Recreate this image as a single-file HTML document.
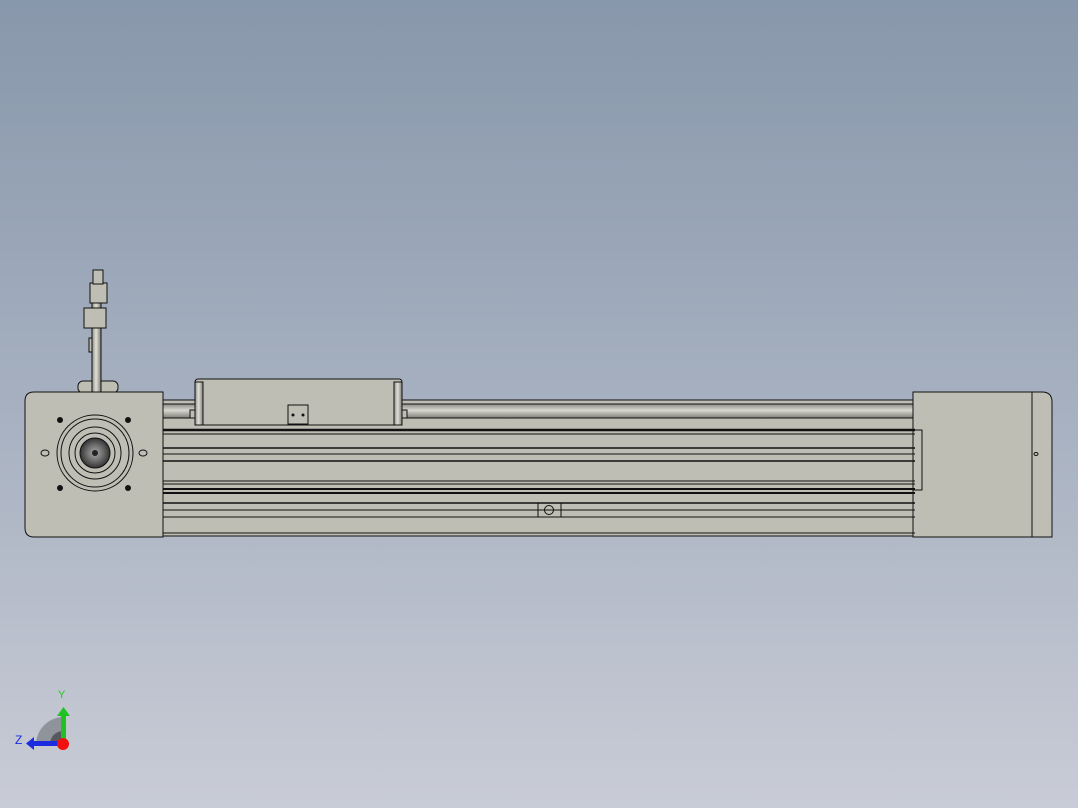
<html><body style="margin:0;width:1078px;height:808px;overflow:hidden">
<svg width="1078" height="808" viewBox="0 0 1078 808" xmlns="http://www.w3.org/2000/svg">
<defs>
<linearGradient id="bg" x1="0" y1="0" x2="0" y2="1"><stop offset="0" stop-color="#8897ab"/><stop offset="0.5" stop-color="#a6b0c0"/><stop offset="1" stop-color="#c9ccd6"/></linearGradient>
<linearGradient id="rod" x1="0" y1="0" x2="0" y2="1"><stop offset="0" stop-color="#8e8d85"/><stop offset="0.45" stop-color="#d8d8d0"/><stop offset="1" stop-color="#7e7d76"/></linearGradient>
<linearGradient id="vrod" x1="0" y1="0" x2="1" y2="0"><stop offset="0" stop-color="#8e8d85"/><stop offset="0.45" stop-color="#e0e0d8"/><stop offset="1" stop-color="#7e7d76"/></linearGradient>
<radialGradient id="hub"><stop offset="0" stop-color="#aaa"/><stop offset="0.6" stop-color="#666"/><stop offset="1" stop-color="#333"/></radialGradient>
</defs>
<rect width="1078" height="808" fill="url(#bg)"/>
<g stroke="#111" stroke-width="1" fill="#bfbeb4">
<!-- sensor -->
<rect x="78" y="381" width="40" height="12" rx="5"/>
<rect x="92" y="300" width="9" height="92" fill="url(#vrod)"/>
<rect x="84" y="308" width="22" height="20"/>
<rect x="90" y="283" width="17" height="20"/>
<rect x="93" y="270" width="10" height="14"/>
<rect x="89" y="338" width="3" height="14"/>
<!-- rail -->
<rect x="163" y="400" width="752" height="136"/>
<rect x="163" y="404" width="752" height="14" fill="url(#rod)"/>
<!-- carriage -->
<rect x="195" y="379" width="207" height="46" rx="3"/>
<rect x="195" y="382" width="8" height="43" fill="url(#vrod)"/>
<rect x="394" y="382" width="8" height="43" fill="url(#vrod)"/>
<rect x="288" y="405" width="20" height="19"/>
<rect x="190" y="410" width="5" height="8"/>
<rect x="402" y="410" width="5" height="8"/>
<!-- left block -->
<path d="M34 392 H163 V537 H34 Q25 537 25 528 V401 Q25 392 34 392 Z"/>
<!-- right block -->
<path d="M913 392 H1042 Q1052 392 1052 402 V537 H913 Z"/>
<line x1="1032" y1="392" x2="1032" y2="537"/>
<rect x="913" y="430" width="9" height="60" fill="none"/>
<rect x="538" y="503" width="23" height="14"/>
</g>
<g stroke="#111" fill="none">
<line x1="163" y1="430" x2="915" y2="430" stroke-width="2.5"/>
<line x1="163" y1="434" x2="915" y2="434"/>
<line x1="163" y1="448" x2="915" y2="448" stroke-width="1.5"/>
<line x1="163" y1="454" x2="915" y2="454"/>
<line x1="163" y1="461" x2="915" y2="461" stroke-width="1.5"/>
<line x1="163" y1="481" x2="915" y2="481"/>
<line x1="163" y1="484" x2="915" y2="484"/>
<line x1="163" y1="489" x2="915" y2="489" stroke-width="2"/>
<line x1="163" y1="493" x2="915" y2="493" stroke-width="2"/>
<line x1="163" y1="503" x2="915" y2="503" stroke-width="1.5"/>
<line x1="163" y1="510" x2="915" y2="510"/>
<line x1="163" y1="517" x2="915" y2="517"/>
<line x1="163" y1="533" x2="915" y2="533"/>
<circle cx="549" cy="510" r="4.5"/><line x1="545" y1="510" x2="553" y2="510"/>
<ellipse cx="1036" cy="454" rx="2" ry="1.5"/>
<circle cx="95" cy="453" r="38"/><circle cx="95" cy="453" r="34"/>
<circle cx="95" cy="453" r="26"/><circle cx="95" cy="453" r="20"/>
<ellipse cx="45" cy="453" rx="4" ry="3"/><ellipse cx="143" cy="453" rx="4" ry="3"/>
</g>
<circle cx="95" cy="453" r="15" fill="url(#hub)" stroke="#111"/>
<circle cx="95" cy="453" r="3" fill="#222"/>
<g fill="#111"><circle cx="60" cy="420" r="3"/><circle cx="128" cy="420" r="3"/><circle cx="60" cy="488" r="3"/><circle cx="128" cy="488" r="3"/><circle cx="293" cy="415" r="1.5"/><circle cx="303" cy="415" r="1.5"/></g>
<!-- axis triad -->
<path d="M36 744 A28 28 0 0 1 63 717 V744 Z" fill="#8f939c"/>
<path d="M50 744 A13 13 0 0 1 63 731 V744 Z" fill="#55585f"/>
<rect x="61" y="716" width="5" height="28" fill="#1fc21f"/>
<path d="M57 716 L63.5 707 L70 716 Z" fill="#1fc21f"/>
<rect x="34" y="741" width="29" height="5" fill="#1a2be0"/>
<path d="M34 737 L26 743.5 L34 750 Z" fill="#1a2be0"/>
<circle cx="63" cy="744" r="6" fill="#f01010"/>
<text x="58" y="698" font-family="Liberation Sans, sans-serif" font-size="11" fill="#20d020">Y</text>
<text x="15" y="744" font-family="Liberation Sans, sans-serif" font-size="12" fill="#1a2be0">Z</text>
</svg>
</body></html>
